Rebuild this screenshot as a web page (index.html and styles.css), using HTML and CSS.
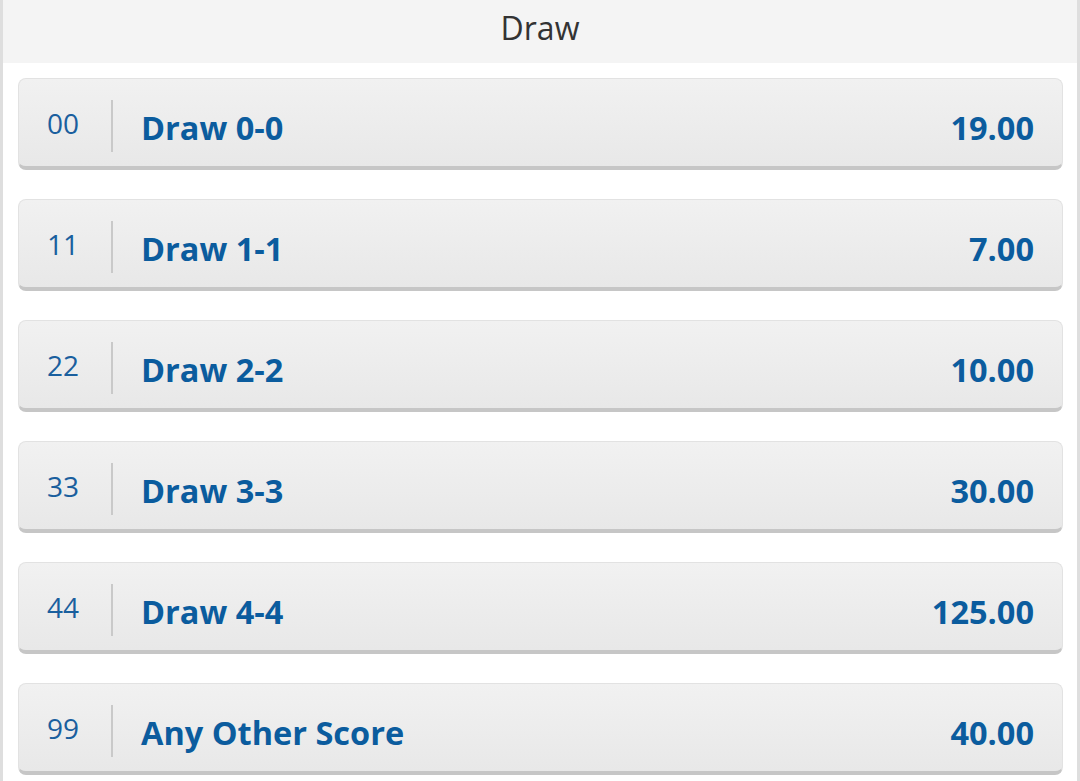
FILE: index.html
```html
<!DOCTYPE html>
<html>
<head>
<meta charset="utf-8">
<link rel="stylesheet" href="styles.css">
</head>
<body>
<div class="panel">
  <div class="header">Draw</div>
  <div class="list">
    <div class="row"><span class="code">00</span><span class="sep"></span><span class="name">Draw 0-0</span><span class="odds">19.00</span></div>
    <div class="row"><span class="code">11</span><span class="sep"></span><span class="name">Draw 1-1</span><span class="odds">7.00</span></div>
    <div class="row"><span class="code">22</span><span class="sep"></span><span class="name">Draw 2-2</span><span class="odds">10.00</span></div>
    <div class="row"><span class="code">33</span><span class="sep"></span><span class="name">Draw 3-3</span><span class="odds">30.00</span></div>
    <div class="row"><span class="code">44</span><span class="sep"></span><span class="name">Draw 4-4</span><span class="odds">125.00</span></div>
    <div class="row"><span class="code">99</span><span class="sep"></span><span class="name">Any Other Score</span><span class="odds">40.00</span></div>
  </div>
</div>
</body>
</html>
```
FILE: styles.css
```css
html, body {
  margin: 0;
  padding: 0;
  background: #ffffff;
  font-family: "Open Sans", "Noto Sans", sans-serif;
}
.panel {
  width: 1080px;
  height: 781px;
  box-sizing: border-box;
  border-left: 3px solid #dedede;
  border-right: 3px solid #dedede;
  overflow: hidden;
}
.header {
  height: 63px;
  background: #f4f4f4;
  color: #333333;
  font-size: 32px;
  line-height: 56px;
  text-align: center;
}
.list {
  display: flex;
  flex-direction: column;
  gap: 29px;
  padding: 15px 14px 0 15px;
}
.row {
  height: 87px;
  box-sizing: content-box;
  display: flex;
  align-items: center;
  border: 1px solid #e2e2e2;
  border-bottom: 4px solid #c6c6c6;
  border-radius: 8px;
  background: linear-gradient(#f1f1f1, #e8e8e8);
  padding: 0 28px 0 28px;
  color: #0b5c9e;
}
.code {
  width: 64px;
  font-size: 28px;
  margin-top: 1px;
  color: #1a5f9e;
}
.sep {
  width: 2px;
  height: 52px;
  margin-top: 6px;
  background: #c9c9c9;
  margin-right: 28px;
}
.name {
  flex: 1;
  font-size: 32.5px;
  font-weight: 700;
  margin-top: 10px;
}
.odds {
  font-size: 32.5px;
  font-weight: 700;
  margin-top: 10px;
}
```
